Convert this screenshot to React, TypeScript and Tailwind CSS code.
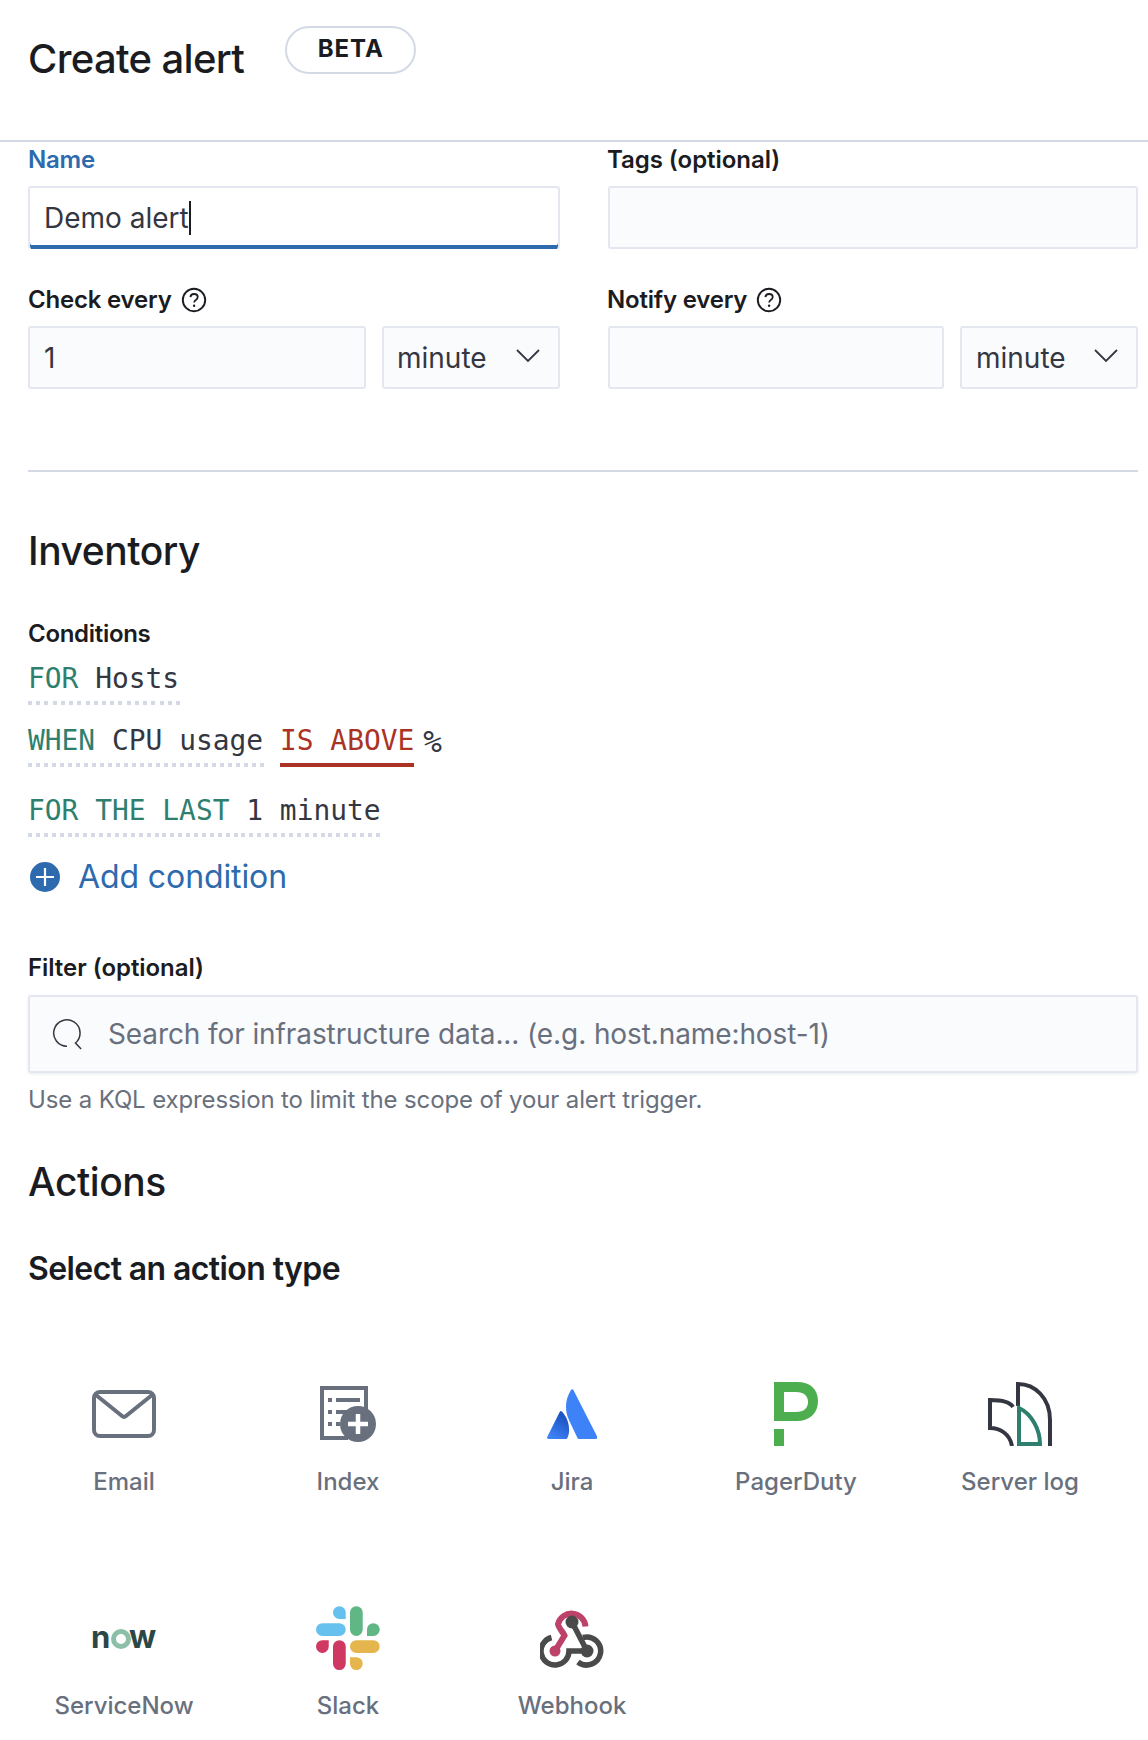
import React from "react";

function Help() {
  return (
    <svg width="26" height="26" viewBox="0 0 26 26" fill="none" className="ml-[9px] shrink-0">
      <circle cx="13" cy="13" r="11.2" stroke="#1a1c21" strokeWidth="1.9" />
      <path d="M9.4 10.2c.2-2 1.700-3.200 3.700-3.200 2.100 0 3.600 1.300 3.600 3.100 0 1.400-.8 2.200-1.900 2.900-1.100.7-1.600 1.300-1.600 2.600" stroke="#1a1c21" strokeWidth="1.800" />
      <circle cx="13.100" cy="18.800" r="1.200" fill="#1a1c21" />
    </svg>
  );
}

function Label({ children, blue, wide }: { children: React.ReactNode; blue?: boolean; wide?: boolean }) {
  return (
    <div className={`flex items-center text-[24px] leading-[30px] font-semibold ${wide ? "tracking-[-0.05px]" : "tracking-[-0.2px]"} ${blue ? "text-[#2d6aae]" : "text-[#1a1c21]"}`}>
      {children}
    </div>
  );
}

function Box({ className = "", children }: { className?: string; children?: React.ReactNode }) {
  return (
    <div className={`flex items-center rounded-[3px] border-2 border-[#e4e7f0] bg-[#fafbfd] text-[28px] text-[#343741] ${className}`}>
      {children}
    </div>
  );
}

function Select({ right }: { right?: boolean }) {
  return (
    <Box className={`h-[63px] w-[178px] pr-[17px] justify-between ${right ? "pl-[14px]" : "pl-[13px]"}`}>
      <span>minute</span>
      <svg width="26" height="16" viewBox="0 0 26 16" fill="none" className="mb-[4px]">
        <path d="M2 2l11 11L24 2" stroke="#343741" strokeWidth="1.800" />
      </svg>
    </Box>
  );
}

function Dotted({ width, count }: { width: string; count: number }) {
  return (
    <div className={`mt-[4px] flex h-[4px] justify-between ${width}`}>
      {Array.from({ length: count }, (_, i) => (
        <span key={i} className="h-[4px] w-[4px] bg-[#d3dae6]" />
      ))}
    </div>
  );
}

const Mono = "font-['DejaVu_Sans_Mono',monospace] text-[27.9px] leading-[36px] text-[#343741] whitespace-pre";

function Action({ label, children }: { label: string; children: React.ReactNode }) {
  return (
    <div className="flex h-[224px] flex-col items-center pt-[50px]">
      <div className="flex h-[72px] w-[72px] items-center justify-center">{children}</div>
      <div className="mt-[17px] text-[24px] leading-[30px] font-medium text-[#69707d]">{label}</div>
    </div>
  );
}

export default function App() {
  return (
    <div className="h-[1740px] w-[1148px] overflow-hidden bg-white font-[Inter,sans-serif]">
      <div className="flex h-[142px] items-start border-b-2 border-[#d3dae6] pl-[28px]">
        <h1 className="mt-[32px] text-[40px] leading-[54px] font-medium tracking-[-0.65px] text-[#1a1c21]">Create alert</h1>
        <div className="ml-[41px] mt-[26px] flex h-[48px] w-[131px] items-center justify-center rounded-full border-2 border-[#d3dae6] pb-[2px] text-[24px] font-bold tracking-[1px] text-[#1a1c21]">
          BETA
        </div>
      </div>

      <div className="pl-[28px] pr-[10px]">
        <div className="grid grid-cols-[532px_530px] gap-x-[48px]">
          <div>
            <div className="mt-[3px]"><Label blue>Name</Label></div>
            <div className="mt-[11px] flex h-[63px] items-center rounded-[3px] border-2 border-b-0 border-[#e4e7f0] bg-white pb-[2px] pl-[14px] text-[28px] text-[#343741] shadow-[inset_0_-4px_0_#2d6aae]">
              <span>Demo alert</span>
              <span className="h-[34px] w-[2px] bg-[#1a1c21]" />
            </div>
          </div>
          <div>
            <div className="-ml-[1px] mt-[3px]"><Label wide>Tags (optional)</Label></div>
            <Box className="mt-[11px] h-[63px]" />
          </div>
          <div>
            <div className="mt-[36px]"><Label>Check every<Help /></Label></div>
            <div className="mt-[11px] flex justify-between">
              <Box className="h-[63px] w-[338px] pl-[14px]">1</Box>
              <Select />
            </div>
          </div>
          <div>
            <div className="-ml-[1px] mt-[36px]"><Label>Notify every<Help /></Label></div>
            <div className="mt-[11px] flex justify-between">
              <Box className="h-[63px] w-[336px]" />
              <Select right />
            </div>
          </div>
        </div>

        <div className="mt-[81px] h-[2px] bg-[#d3dae6]" />

        <h2 className="mt-[55px] text-[39px] leading-[48px] font-medium tracking-[-0.45px] text-[#1a1c21]">Inventory</h2>

        <div className="mt-[44px] text-[24px] leading-[30px] font-semibold tracking-[-0.3px] text-[#1a1c21]">Conditions</div>

        <div className={`mt-[12px] ${Mono}`}>
          <span className="text-[#2f7f6f]">FOR</span> Hosts
        </div>
        <Dotted width="w-[152px]" count={19} />

        <div className={`mt-[18px] flex ${Mono}`}>
          <div>
            <div><span className="text-[#2f7f6f]">WHEN</span> CPU usage</div>
            <Dotted width="w-[236px]" count={30} />
          </div>
          <div className="ml-[16px]">
            <div className="text-[#ab3326]">IS ABOVE</div>
            <div className="mt-[4px] h-[4px] w-[134px] bg-[#ab3326]" />
          </div>
          <div className="ml-[9px] text-[31px]">%</div>
        </div>

        <div className={`mt-[26px] ${Mono}`}>
          <span className="text-[#2f7f6f]">FOR THE LAST</span> 1 minute
        </div>
        <Dotted width="w-[352px]" count={45} />

        <div className="mt-[20px] flex h-[40px] items-center pl-[1px] text-[32px] tracking-[-0.1px] text-[#2d6aae]">
          <svg width="32" height="32" viewBox="0 0 32 32" className="shrink-0">
            <circle cx="16" cy="16" r="15" fill="#2d6aae" />
            <path d="M16 7v18M7 16h18" stroke="#fff" strokeWidth="2.200" />
          </svg>
          <span className="ml-[17px]">Add condition</span>
        </div>

        <div className="mt-[56px]"><Label wide>Filter (optional)</Label></div>
        <Box className="mt-[12px] h-[78px] shadow-[0_1px_3px_rgba(152,162,179,0.2)] pl-[21px]">
          <svg width="32" height="32" viewBox="0 0 34 34" fill="none" className="shrink-0">
            <path d="M17 30a14 14 0 1 1 9-3.400L32 33" stroke="#343741" strokeWidth="1.600" />
          </svg>
          <span className="ml-[25px] whitespace-nowrap tracking-[-0.1px] text-[#69707d]">Search for infrastructure data... (e.g. host.name:host-1)</span>
        </Box>
        <div className="mt-[12px] text-[24px] leading-[30px] tracking-[-0.13px] text-[#69707d]">Use a KQL expression to limit the scope of your alert trigger.</div>

        <h2 className="mt-[42px] text-[39px] leading-[50px] font-medium tracking-[-0.45px] text-[#1a1c21]">Actions</h2>
        <div className="mt-[42px] text-[32px] leading-[40px] font-semibold tracking-[-0.6px] text-[#1a1c21]">Select an action type</div>
      </div>

      <div className="mt-[39px] grid grid-cols-[repeat(5,224px)] pl-[12px]">
        <Action label="Email">
          <svg width="64" height="48" viewBox="0 0 64 48" fill="none">
            <rect x="2" y="2" width="60" height="44" rx="6" stroke="#69707d" strokeWidth="4" />
            <path d="M4 5l26 21a3 3 0 0 0 4 0L60 5" stroke="#69707d" strokeWidth="4" />
          </svg>
        </Action>
        <Action label="Index">
          <svg width="56" height="56" viewBox="0 0 56 56" fill="none">
            <path d="M46 24V2H2v50h26" stroke="#69707d" strokeWidth="4" />
            <path d="M8 12h4v4H8zM8 24h4v4H8zM8 36h4v4H8z" fill="#69707d" />
            <path d="M16 12h24v4H16zM16 24h12v4H16zM16 36h4v4h-4z" fill="#69707d" />
            <circle cx="38" cy="38" r="18" fill="#69707d" />
            <path d="M38 28v20M28 38h20" stroke="#fff" strokeWidth="4.500" />
          </svg>
        </Action>
        <Action label="Jira">
          <svg width="50" height="50" viewBox="0 0 50 50">
            <defs>
              <linearGradient id="jg" x1="0.7" y1="0.2" x2="0.3" y2="1">
                <stop offset="0" stopColor="#1d55c4" />
                <stop offset="1" stopColor="#4083f7" />
              </linearGradient>
            </defs>
            <path d="M14.800 22.500c-.6-.8-1.500-.7-2 .2L.2 47.900C-.300 48.900.4 50 1.500 50h17.500c.6 0 1.100-.3 1.300-.8 3.800-7.800 1.500-19.800-5.500-26.700z" fill="url(#jg)" />
            <path d="M24 1c-6.600 10.300-6.100 21.800-1.800 30.500l8.400 17.700c.2.500.8.800 1.300.8h17.100c1.100 0 1.800-1.100 1.300-2.100L26.400 1c-.5-1-1.900-1-2.400 0z" fill="#3e82f7" />
          </svg>
        </Action>
        <Action label="PagerDuty">
          <svg width="44" height="64" viewBox="0 0 44 64" fill="#4cae4f">
            <path d="M0 47h10v17H0z" />
            <path fillRule="evenodd" d="M0 0h23c13 0 21 7 21 19s-8 20-21 20H0zM10 10v20h12c8 0 12-4 12-10s-4-10-12-10z" />
          </svg>
        </Action>
        <Action label="Server log">
          <svg width="64" height="64" viewBox="0 0 64 64" fill="none">
            <path d="M30 24V2c17 0 32 14 32 36v26" stroke="#343741" strokeWidth="4" />
            <path d="M25 25C22 20 12 18 2 18v28c10 0 20 6 22 18" stroke="#343741" strokeWidth="4" />
            <path d="M31 26v36h21c0-14-8-30-21-36z" stroke="#2f7f6f" strokeWidth="4" />
          </svg>
        </Action>
        <Action label="ServiceNow">
          <svg width="64" height="24" viewBox="0 -1 64 24" className="overflow-visible font-[Inter,sans-serif]">
            <text x="-1" y="21" fontSize="31" fontWeight="700" fill="#2c4745">n</text>
            <circle cx="29" cy="12" r="7.500" fill="none" stroke="#8cbfa8" strokeWidth="5" />
            <text x="37" y="21" fontSize="32" fontWeight="700" fill="#2c4745">w</text>
          </svg>
        </Action>
        <Action label="Slack">
          <svg width="64" height="64" viewBox="0 0 54 54">
            <path d="M19.712.133a5.381 5.381 0 0 0-5.376 5.387 5.381 5.381 0 0 0 5.376 5.386h5.376V5.520A5.381 5.381 0 0 0 19.712.133m0 14.365H5.376A5.381 5.381 0 0 0 0 19.884a5.381 5.381 0 0 0 5.376 5.387h14.336a5.381 5.381 0 0 0 5.376-5.387 5.381 5.381 0 0 0-5.376-5.386" fill="#67c1ee" />
            <path d="M53.760 19.884a5.381 5.381 0 0 0-5.376-5.386 5.381 5.381 0 0 0-5.376 5.386v5.387h5.376a5.381 5.381 0 0 0 5.376-5.387m-14.336 0V5.520A5.381 5.381 0 0 0 34.048.133a5.381 5.381 0 0 0-5.376 5.387v14.364a5.381 5.381 0 0 0 5.376 5.387 5.381 5.381 0 0 0 5.376-5.387" fill="#60b685" />
            <path d="M34.048 54a5.381 5.381 0 0 0 5.376-5.387 5.381 5.381 0 0 0-5.376-5.386h-5.376v5.386A5.381 5.381 0 0 0 34.048 54m0-14.365h14.336a5.381 5.381 0 0 0 5.376-5.386 5.381 5.381 0 0 0-5.376-5.387H34.048a5.381 5.381 0 0 0-5.376 5.387 5.381 5.381 0 0 0 5.376 5.386" fill="#e4b64d" />
            <path d="M0 34.249a5.381 5.381 0 0 0 5.376 5.386 5.381 5.381 0 0 0 5.376-5.386v-5.387H5.376A5.381 5.381 0 0 0 0 34.250m14.336-.001v14.364A5.381 5.381 0 0 0 19.712 54a5.381 5.381 0 0 0 5.376-5.387V34.250a5.381 5.381 0 0 0-5.376-5.387 5.381 5.381 0 0 0-5.376 5.387" fill="#cf3860" />
          </svg>
        </Action>
        <Action label="Webhook">
          <svg width="64" height="64" viewBox="0 -2 64 64" fill="none" className="-mt-[2px]">
            <path d="M45.500 19.500A14 14 0 0 0 18 17C18.500 21 23 25 24.500 28.500L15 44" stroke="#bd4269" strokeWidth="6" />
            <circle cx="15" cy="44" r="5.500" fill="#bd4269" />
            <path d="M11.500 30.500A14 14 0 1 0 29 44H47" stroke="#4a4a4a" strokeWidth="5.500" />
            <path d="M38 55A14 14 0 1 0 43 30.500" stroke="#4a4a4a" strokeWidth="5.500" />
            <path d="M32 15L47 44" stroke="#4a4a4a" strokeWidth="5.500" />
            <circle cx="32" cy="15" r="6.500" fill="#4a4a4a" />
            <circle cx="47" cy="44" r="6.500" fill="#4a4a4a" />
          </svg>
        </Action>
      </div>
    </div>
  );
}
